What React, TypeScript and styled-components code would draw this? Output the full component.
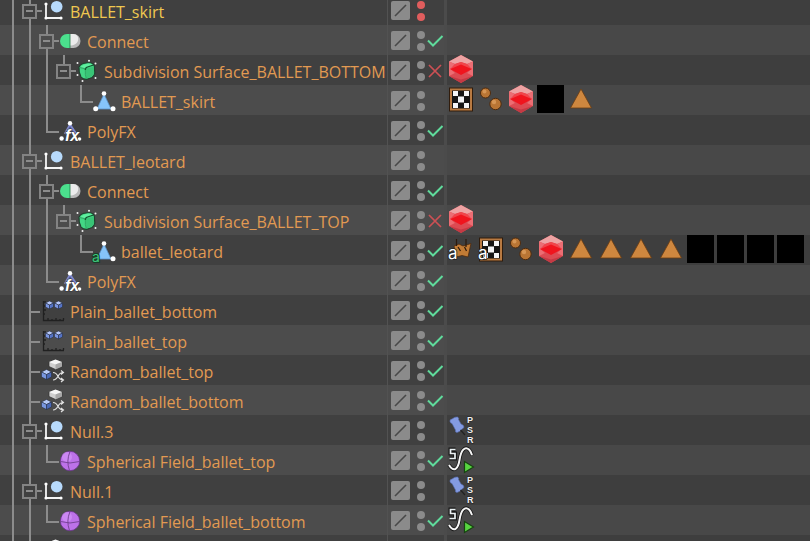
import React from "react";
import styled, { createGlobalStyle } from "styled-components";

const GlobalStyle = createGlobalStyle`
  *, *::before, *::after { box-sizing: border-box; }
  html, body { margin: 0; background: #404040; }
  body { font-family: "Open Sans", "Noto Sans", sans-serif; overflow: hidden; }
  button { appearance: none; border: 0; margin: 0; padding: 0; background: none; cursor: pointer; font: inherit; }
  svg { display: block; overflow: visible; }
`;

type Guide = "none" | "line" | "elbow" | "tee" | "stub" | "through";
type Status = "on" | "off" | "none";
type ObjectKind =
  | "null" | "connect" | "subdivision" | "polygon" | "polygonAnimated"
  | "polyfx" | "plain" | "random" | "sphere";
type TagKind = "gem" | "checker" | "checkerA" | "phong" | "black" | "triangle" | "clothA" | "psr" | "spline";

interface Item {
  name: string;
  kind: ObjectKind;
  guides: Guide[];
  branch: Guide;
  open?: boolean;
  selected?: boolean;
  hidden?: boolean;
  status: Status;
  tags?: TagKind[];
}

const rail = "#8c8c8c";

const Manager = styled.main`
  height: 100vh;
  overflow: hidden;
  background: #404040;
`;

const Tree = styled.ul`
  list-style: none;
  margin: -5px 0 0;
  padding: 0;
`;

const Row = styled.li`
  display: grid;
  grid-template-columns: 387px 57px 3px minmax(0, 1fr);
  height: 30px;
  background: #404040;
  &:nth-child(even) { background: #4c4c4c; }
`;

const NameCell = styled.div`
  display: flex;
  align-items: center;
  min-width: 0;
  padding-left: 4px;
`;

const guideImages: Record<Guide, string> = {
  none: "none",
  line: `linear-gradient(${rail}, ${rail}) 8px 0 / 2px 100% no-repeat`,
  through: `linear-gradient(${rail}, ${rail}) 8px 0 / 2px 100% no-repeat, linear-gradient(${rail}, ${rail}) 8px 15px / 13px 2px no-repeat`,
  tee: `linear-gradient(${rail}, ${rail}) 8px 0 / 2px 100% no-repeat, linear-gradient(${rail}, ${rail}) 8px 16px / 11px 2px no-repeat`,
  elbow: `linear-gradient(${rail}, ${rail}) 8px 0 / 2px 17px no-repeat, linear-gradient(${rail}, ${rail}) 8px 16px / 13px 2px no-repeat`,
  stub: `linear-gradient(${rail}, ${rail}) 8px 0 / 2px 15px no-repeat, linear-gradient(${rail}, ${rail}) 8px 15px / 13px 2px no-repeat`,
};

const GuideCell = styled.span<{ $guide: Guide; $branch?: boolean }>`
  flex: none;
  display: flex;
  align-items: center;
  align-self: stretch;
  width: ${(p) => (p.$branch ? 21 : 17)}px;
  padding: 2px 0 0 1px;
  background: ${(p) => guideImages[p.$guide]};
`;

const Expander = styled.button<{ $light: boolean }>`
  display: grid;
  place-items: center;
  width: 15px;
  height: 15px;
  border: 2px solid #838383;
  background: ${(p) => (p.$light ? "#4c4c4c" : "#404040")};
  &::before { content: ""; width: 7px; height: 2px; background: #8c8c8c; }
`;

const ObjectIcon = styled.svg`
  flex: none;
  width: 24px;
  height: 24px;
`;

const Name = styled.span<{ $selected?: boolean }>`
  margin-left: 4px;
  padding-top: 3px;
  font-size: 16px;
  line-height: 24px;
  white-space: nowrap;
  color: ${(p) => (p.$selected ? "#f0c850" : "#e29a52")};
`;

const ControlCell = styled.div`
  display: flex;
  align-items: center;
  padding: 1px 0 0 3px;
  border-left: 1px solid #525252;
`;

const LayerButton = styled.button`
  display: grid;
  place-items: center;
  width: 19px;
  height: 19px;
  border-radius: 2px;
  background: #8b8b8b;
`;

const Visibility = styled.button<{ $hidden?: boolean }>`
  display: flex;
  flex-direction: column;
  gap: 4px;
  margin-left: 7px;
  color: ${(p) => (p.$hidden ? "#e05d5d" : "#8b8b8b")};
`;

const Dot = styled.span`
  width: 8px;
  height: 8px;
  border-radius: 50%;
  background: currentColor;
`;

const StateButton = styled.button`
  margin-left: 2px;
`;

const Divider = styled.div`
  background: #4b4b4b;
`;

const TagCell = styled.div`
  display: flex;
  align-items: flex-start;
  gap: 3px;
  min-width: 0;
  background: #3e3e3e;
  ${Row}:nth-child(even) & { background: #484848; }
`;

const TagButton = styled.button`
  flex: none;
  width: 27px;
  height: 28px;
`;

const Cube = ({ x, y, r, top, left, right }: { x: number; y: number; r: number; top: string; left: string; right: string }) => {
  const h = r * 0.5;
  return (
    <g stroke="#232838" strokeWidth=".5" strokeLinejoin="round">
      <path d={`M${x} ${y - r}l${r} ${h}l${-r} ${h}l${-r} ${-h}z`} fill={top} />
      <path d={`M${x - r} ${y - h}l${r} ${h}v${r}l${-r} ${-h}z`} fill={left} />
      <path d={`M${x + r} ${y - h}l${-r} ${h}v${r}l${r} ${-h}z`} fill={right} />
    </g>
  );
};

const Polygon = ({ animated }: { animated?: boolean }) => (
  <>
    <path d="M11 6L18 21H4z" fill="#86c4fa" stroke="#5d93c6" strokeWidth=".8" />
    <g fill="#fff">
      <circle cx="11" cy="5.5" r="2.3" />
      {!animated && <circle cx="2.7" cy="20.7" r="2.5" />}
      <circle cx="20" cy="20.7" r="2.5" />
    </g>
    {animated && (
      <text x="-1" y="24" fontFamily="Inter, sans-serif" fontSize="14" fill="#3fc57a" stroke="#173d28" strokeWidth="2" paintOrder="stroke">a</text>
    )}
  </>
);

const objectArt: Record<ObjectKind, React.ReactNode> = {
  null: (
    <>
      <path d="M4 6V20H19" fill="none" stroke="#f4f4f4" strokeWidth="1.8" />
      <g fill="#fff"><circle cx="4" cy="6" r="1.6" /><circle cx="4" cy="20" r="1.6" /><circle cx="19" cy="20" r="1.6" /></g>
      <circle cx="14.7" cy="8.7" r="5.8" fill="#b7dafc" />
    </>
  ),
  connect: (
    <>
      <path d="M11 6H8a7 7 0 0 0 0 14h3z" fill="#4be08d" />
      <path d="M11 6h3.500a7 7 0 0 1 0 14H11z" fill="#b9b9b9" />
      <path d="M11 6h3c4 0 6 3 5 6.500-1 3.500-4 5-8 5z" fill="#ececec" />
      <path d="M11 6v14" stroke="#207a48" strokeWidth=".8" />
    </>
  ),
  subdivision: (
    <>
      <path d="M3 9Q4 6.500 7 5.500L13 4.500Q17.500 5 18.300 8L18.800 15Q18.300 18 16 19.500L11 21.300Q7 21.500 5 19Q2.500 14 3 9z" fill="#43d685" stroke="#21402f" strokeWidth="1.200" />
      <path d="M4.500 9Q7 6 12.500 5.500Q16 5.500 17 7.500L9.500 10.300z" fill="#5ff0a0" />
      <path d="M9.500 10.800L18 8.500L18 15Q17 18.500 10.500 20.500z" fill="#39c476" />
      <path d="M9.300 12Q9 9.800 11.500 9L17.500 7" fill="none" stroke="#14502e" strokeWidth="1.300" />
      <path d="M3.500 9.500L9.300 10.800M9.300 12Q9 17 10.300 20.500" fill="none" stroke="#2b9a5c" strokeWidth=".8" />
      <g fill="#f0f0f0">
        <circle cx="1.500" cy="5" r="1" /><circle cx="13" cy="2.800" r="1" /><circle cx="19.500" cy="5.500" r="1" />
        <circle cx="19.500" cy="20" r="1" /><circle cx="6.500" cy="23" r="1" /><circle cx="1.500" cy="17" r="1" />
      </g>
    </>
  ),
  polygon: <Polygon />,
  polygonAnimated: <Polygon animated />,
  polyfx: (
    <>
      <path d="M11 7L6 16M11 7L17 16" stroke="#7f88cc" strokeWidth="2.500" />
      <path d="M11 8L15 15H7z" fill="#505b99" />
      <circle cx="11" cy="5.300" r="2.200" fill="#fff" />
      <circle cx="2.600" cy="20.500" r="2.200" fill="#fff" />
      <circle cx="20.500" cy="21" r="1.800" fill="#fff" />
      <text x="6" y="23" fontFamily="Liberation Sans, sans-serif" fontSize="16" fontWeight="700" fontStyle="italic" fill="#fff" stroke="#35353b" strokeWidth="1" paintOrder="stroke">fx</text>
    </>
  ),
  plain: (
    <>
      <path d="M1.500 3V22.500H22M1.500 4H4M1.500 8H3M1.500 12H4M1.500 16H3M6 22V20M10 22V21M14 22V20M18 22V21M21.500 22V20" fill="none" stroke="#202020" strokeWidth="1.300" />
      <Cube x={7.5} y={7} r={4} top="#b5c6f8" left="#7b96e2" right="#5573c4" />
      <Cube x={16.5} y={7} r={4} top="#b5c6f8" left="#7b96e2" right="#5573c4" />
    </>
  ),
  random: (
    <>
      <path d="M13.500 1.500L20 4V8.500L13.500 11.500L7 8.500V4z" fill="#cfcfcf" stroke="#303030" strokeWidth=".7" />
      <path d="M13.500 1.500L20 4L13.500 6.500L7 4z" fill="#f5f5f5" />
      <path d="M20 4V8.500L13.500 11.500V6.500z" fill="#a7a7a7" />
      <Cube x={4.5} y={16.5} r={5} top="#b5c9f7" left="#7896df" right="#4a69b7" />
      <path d="M11 14.500C17 14.500 15 22 21 22M11 22C17 22 15 14.500 21 14.500M19 12.500L21.500 14.500L19 16.500M19 20L21.500 22L19 24" fill="none" stroke="#e2e2e2" strokeWidth="1.100" />
    </>
  ),
  sphere: (
    <>
      <circle cx="11" cy="13" r="9.700" fill="#bd72e9" stroke="#69358a" strokeWidth=".8" />
      <circle cx="8" cy="9" r="5" fill="#d291f7" opacity=".7" />
      <path d="M1.500 13.500Q11 16.500 20.500 13.500M11 3.500Q7 13 10.500 22.500" fill="none" stroke="#70408e" strokeWidth=".9" />
    </>
  ),
};

const LetterA = () => (
  <text x="1" y="24" fontFamily="Inter, sans-serif" fontSize="17" fill="#fff" stroke="#222" strokeWidth="1.500" paintOrder="stroke">a</text>
);

const Checker = () => (
  <>
    <rect x="2.500" y="3" width="23" height="23" fill="#b87a42" stroke="#301c0c" />
    <rect x="5" y="5.500" width="18" height="18" fill="#151515" />
    <path d="M6 6h5v5H6zM17 6h5v5h-5zM11 11.500h6v6h-6zM6 18h5v5H6zM17 18h5v5h-5z" fill="#f4f5f7" />
  </>
);

const tagArt: Record<TagKind, React.ReactNode> = {
  gem: (
    <>
      <path d="M14 0L26 6.500V21L14 28L2 21V6.500z" fill="#dc4a52" />
      <path d="M14 0L26 6.500L20 9L14 7L8 9L2 6.500z" fill="#eda3a3" />
      <path d="M2 6.500L8 9L3.500 14L8 18L2 21zM26 6.500L20 9L24.500 14L20 18L26 21z" fill="#ec6d73" />
      <path d="M14 8L25 14L14 20L3 14z" fill="#f0141d" />
      <path d="M14 7L20 9L24.500 14L14 9.500L3.500 14L8 9z" fill="#f1444a" />
      <path d="M2 21L14 24.500L26 21L14 28z" fill="#c43a44" />
    </>
  ),
  checker: <Checker />,
  checkerA: <><Checker /><LetterA /></>,
  phong: (
    <>
      <g fill="#b97534" stroke="#4e2b0e" strokeWidth="1"><circle cx="8.500" cy="8" r="5" /><circle cx="18.500" cy="19" r="5.700" /></g>
      <circle cx="7.500" cy="6.500" r="2" fill="#d69655" /><circle cx="17" cy="17" r="2.200" fill="#d69655" />
    </>
  ),
  black: <rect width="27" height="28" fill="#000" />,
  triangle: <path d="M14 4L24.500 23H3.500z" fill="#ce873f" stroke="#693c13" strokeWidth=".8" />,
  clothA: (
    <>
      <path d="M7 11L12 9L16 11L24 8.500L21 22L15 20.500L9 22z" fill="#c17b35" stroke="#4b2a0f" strokeWidth=".8" />
      <path d="M9.500 4V11M19 4V12M11 12L13.500 16M17.500 12L19.500 16" fill="none" stroke="#2c1a0c" strokeWidth="1.200" />
      <LetterA />
    </>
  ),
  psr: (
    <>
      <path d="M3 6.500Q2.500 4.500 5 4Q8 1.500 10.500 2Q12.500 3 11.500 4.500L14 9Q17 10 17 12Q16.500 13.500 15 14Q13 17 10 17.500Q8 17.500 8.500 15L5 8.500Q3.500 8.500 3 6.500z" fill="#849be2" stroke="#566cae" strokeWidth=".6" />
      <path d="M13.500 15L18 20" stroke="#222" strokeWidth="1.200" />
      <g fontFamily="Liberation Sans, sans-serif" fontSize="9" fontWeight="700" fill="#f2f2f2" stroke="#222" strokeWidth="1" paintOrder="stroke">
        <text x="20" y="8">P</text><text x="20" y="18">S</text><text x="20" y="28">R</text>
      </g>
    </>
  ),
  spline: (
    <>
      <path d="M2 20C7 28 11 24 12.500 15C14 5 18 1 22 4.500Q24 6.500 25 10" fill="none" stroke="#161616" strokeWidth="3.500" />
      <path d="M2 20C7 28 11 24 12.500 15C14 5 18 1 22 4.500Q24 6.500 25 10" fill="none" stroke="#f5f5f5" strokeWidth="2" />
      <path d="M8.500 4.500H3.500V8.500H8V13.500H2.500" fill="none" stroke="#161616" strokeWidth="4" />
      <path d="M8.500 4.500H3.500V8.500H8V13.500H2.500" fill="none" stroke="#eaf1f3" strokeWidth="1.700" />
      <path d="M17.500 16.500L26.500 22L17.500 27.500z" fill="#57d540" stroke="#174411" strokeWidth="1.200" />
    </>
  ),
};

const tagNames: Record<TagKind, string> = {
  gem: "Object tag", checker: "UVW", checkerA: "UVW", phong: "Phong", black: "Material",
  triangle: "Selection", clothA: "Cloth", psr: "PSR constraint", spline: "Vibrate",
};

const Check = () => (
  <svg width="16" height="14" viewBox="0 0 16 14"><path d="M1 6.500L6 11.500L15.500 2" fill="none" stroke="#5fdb9c" strokeWidth="2" /></svg>
);
const Cross = () => (
  <svg width="16" height="14" viewBox="0 0 16 14"><path d="M2 1L14 13M14 1L2 13" stroke="#cc5054" strokeWidth="1.700" /></svg>
);

const items: Item[] = [
  { name: "BALLET_skirt", kind: "null", guides: ["line"], branch: "through", open: true, selected: true, hidden: true, status: "none" },
  { name: "Connect", kind: "connect", guides: ["line", "line"], branch: "through", open: true, status: "on" },
  { name: "Subdivision Surface_BALLET_BOTTOM", kind: "subdivision", guides: ["line", "line", "line"], branch: "stub", open: true, status: "off", tags: ["gem"] },
  { name: "BALLET_skirt", kind: "polygon", guides: ["line", "line", "line", "none"], branch: "elbow", status: "none", tags: ["checker", "phong", "gem", "black", "triangle"] },
  { name: "PolyFX", kind: "polyfx", guides: ["line", "line"], branch: "elbow", status: "on" },
  { name: "BALLET_leotard", kind: "null", guides: ["line"], branch: "through", open: true, status: "none" },
  { name: "Connect", kind: "connect", guides: ["line", "line"], branch: "through", open: true, status: "on" },
  { name: "Subdivision Surface_BALLET_TOP", kind: "subdivision", guides: ["line", "line", "line"], branch: "stub", open: true, status: "off", tags: ["gem"] },
  { name: "ballet_leotard", kind: "polygonAnimated", guides: ["line", "line", "line", "none"], branch: "elbow", status: "on", tags: ["clothA", "checkerA", "phong", "gem", "triangle", "triangle", "triangle", "triangle", "black", "black", "black", "black"] },
  { name: "PolyFX", kind: "polyfx", guides: ["line", "line"], branch: "elbow", status: "on" },
  { name: "Plain_ballet_bottom", kind: "plain", guides: ["line"], branch: "tee", status: "on" },
  { name: "Plain_ballet_top", kind: "plain", guides: ["line"], branch: "tee", status: "on" },
  { name: "Random_ballet_top", kind: "random", guides: ["line"], branch: "tee", status: "on" },
  { name: "Random_ballet_bottom", kind: "random", guides: ["line"], branch: "tee", status: "on" },
  { name: "Null.3", kind: "null", guides: ["line"], branch: "through", open: true, status: "none", tags: ["psr"] },
  { name: "Spherical Field_ballet_top", kind: "sphere", guides: ["line", "line"], branch: "elbow", status: "on", tags: ["spline"] },
  { name: "Null.1", kind: "null", guides: ["line"], branch: "through", open: true, status: "none", tags: ["psr"] },
  { name: "Spherical Field_ballet_bottom", kind: "sphere", guides: ["line", "line"], branch: "elbow", status: "on", tags: ["spline"] },
  { name: "", kind: "random", guides: ["line"], branch: "tee", status: "none" },
];

const ObjectRow = ({ item, light }: { item: Item; light: boolean }) => (
  <Row>
    <NameCell>
      {item.guides.map((guide, i) => <GuideCell key={i} $guide={guide} />)}
      <GuideCell $guide={item.branch} $branch>
        {item.open && <Expander $light={light} aria-label={`Collapse ${item.name}`} aria-expanded="true" />}
      </GuideCell>
      <ObjectIcon viewBox="0 0 24 24" aria-hidden="true">{objectArt[item.kind]}</ObjectIcon>
      <Name $selected={item.selected}>{item.name}</Name>
    </NameCell>
    <ControlCell>
      <LayerButton aria-label={`Layer of ${item.name}`}>
        <svg width="19" height="19" viewBox="0 0 19 19"><path d="M4 15L15 4" stroke="#484848" strokeWidth="1.600" /></svg>
      </LayerButton>
      <Visibility $hidden={item.hidden} aria-label={`Visibility of ${item.name}`}><Dot /><Dot /></Visibility>
      {item.status !== "none" && (
        <StateButton aria-label={`Enable ${item.name}`} aria-pressed={item.status === "on"}>
          {item.status === "on" ? <Check /> : <Cross />}
        </StateButton>
      )}
    </ControlCell>
    <Divider />
    <TagCell>
      {item.tags?.map((tag, i) => (
        <TagButton key={i} aria-label={tagNames[tag]}>
          <svg width="27" height="28" viewBox="0 0 27 28">{tagArt[tag]}</svg>
        </TagButton>
      ))}
    </TagCell>
  </Row>
);

export default function App() {
  return (
    <>
      <GlobalStyle />
      <Manager>
        <Tree aria-label="Objects">
          {items.map((item, i) => <ObjectRow key={i} item={item} light={i % 2 === 1} />)}
        </Tree>
      </Manager>
    </>
  );
}
